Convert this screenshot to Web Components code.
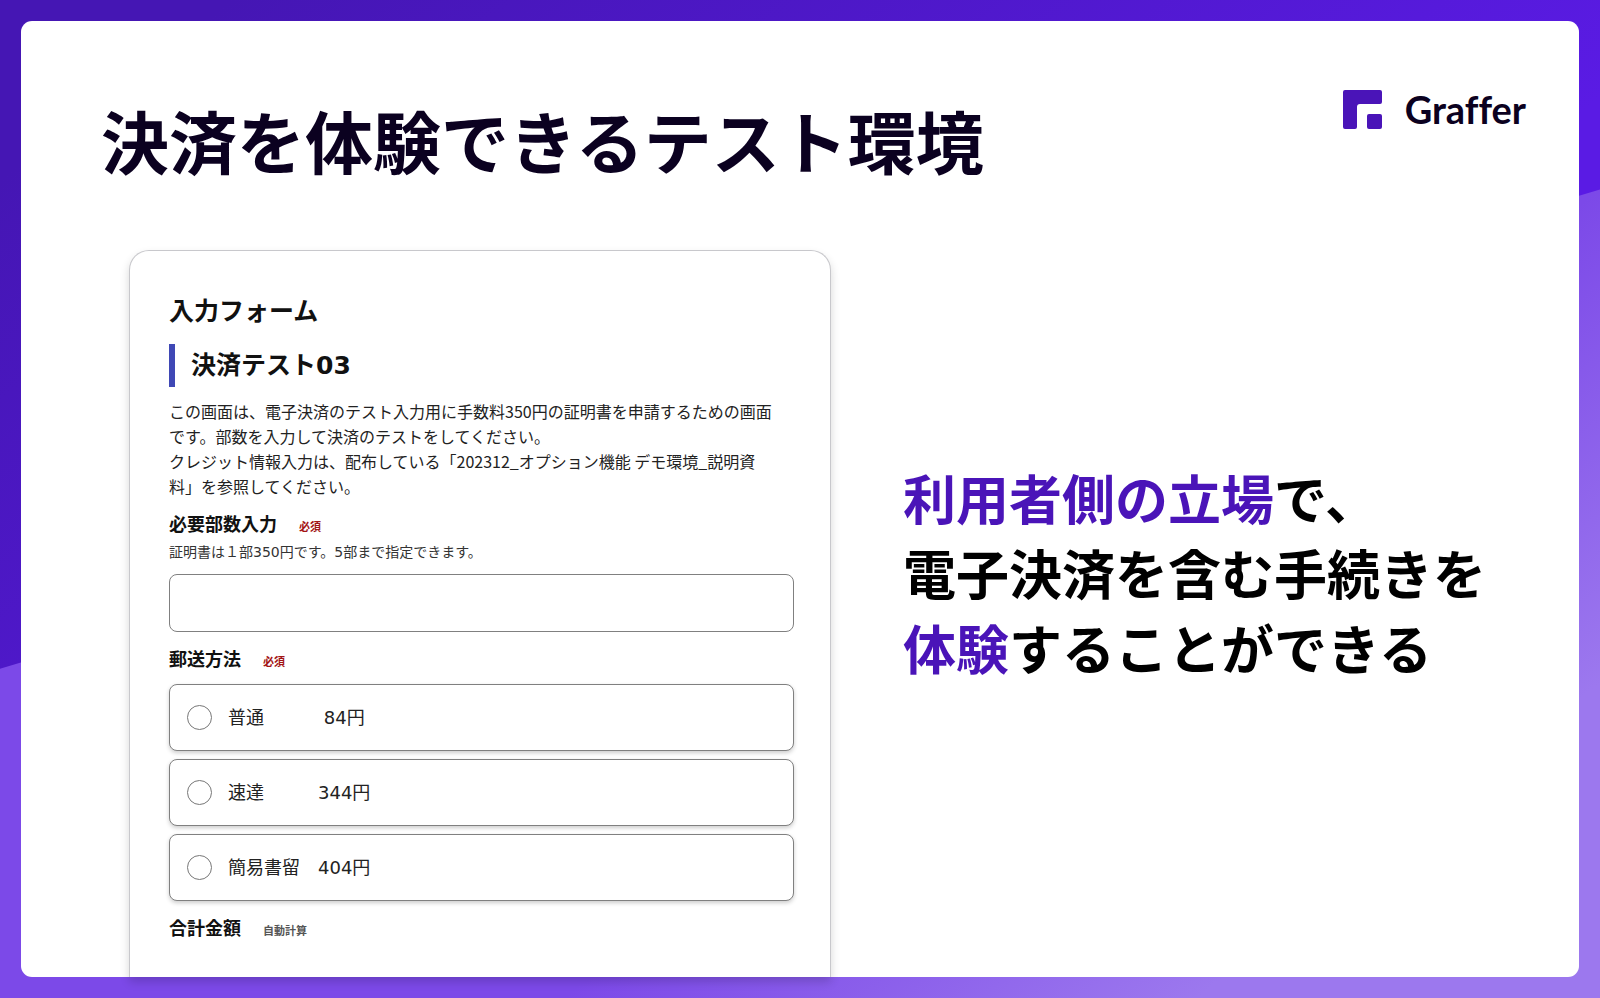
<!DOCTYPE html>
<html lang="ja">
<head>
<meta charset="utf-8">
<title>決済を体験できるテスト環境</title>
<style>
  body {
    margin: 0;
    font-family: "Noto Sans CJK JP", sans-serif;
    color: #000;
  }
</style>
</head>
<body>
<promo-slide>
  <slide-title slot="title">決済を体験できるテスト環境</slide-title>
  <brand-logo slot="logo"></brand-logo>
  <form-card slot="preview" heading="入力フォーム" subject="決済テスト03">
    <span slot="description">この画面は、電子決済のテスト入力用に手数料350円の証明書を申請するための画面<br>です。部数を入力して決済のテストをしてください。<br>クレジット情報入力は、配布している「202312_オプション機能 デモ環境_説明資<br>料」を参照してください。</span>
    <count-field label="必要部数入力" note="必須" hint="証明書は１部350円です。5部まで指定できます。"></count-field>
    <shipping-options label="郵送方法" note="必須"></shipping-options>
    <total-row label="合計金額" note="自動計算"></total-row>
  </form-card>
  <slide-message slot="message"><em>利用者側の立場</em>で、<br>電子決済を含む手続きを<br><em>体験</em>することができる</slide-message>
</promo-slide>

<script>
// Shared by every labelled row of the form.
const labelStyles = `
  .label {
    display: flex;
    align-items: center;
    gap: 22px;
    font-size: 18px;
    line-height: 26px;
    font-weight: 700;
    color: #111;
  }
  .note {
    padding-top: 5px;
    font-size: 11px;
    line-height: 16px;
    color: #a31515;
  }
`;

class PromoSlide extends HTMLElement {
  constructor() {
    super();
    this.attachShadow({ mode: 'open' }).innerHTML = `
      <style>
        :host {
          display: grid;
          box-sizing: border-box;
          min-height: 100vh;
          background: linear-gradient(142deg, #4516b4 8%, #5a1be4 60%);
        }
        .wave, main {
          grid-area: 1 / 1;
        }
        .wave {
          background: linear-gradient(142deg, #7c49e8 64%, #9c78ee 86%);
          clip-path: polygon(0 67%, 100% 19%, 100% 100%, 0 100%);
        }
        main {
          display: flex;
          flex-direction: column;
          margin: 21px;
          border-radius: 11px;
          background: #fff;
          z-index: 1;
        }
        header {
          display: flex;
          justify-content: space-between;
          align-items: flex-start;
          padding: 66px 53px 0 80px;
        }
        .columns {
          flex: 1;
          display: grid;
          grid-template-columns: 702px 1fr;
          column-gap: 72px;
          padding: 58px 0 0 108px;
        }
      </style>
      <div class="wave"></div>
      <main>
        <header>
          <slot name="title"></slot>
          <slot name="logo"></slot>
        </header>
        <div class="columns">
          <slot name="preview"></slot>
          <slot name="message"></slot>
        </div>
      </main>
    `;
  }
}

class SlideTitle extends HTMLElement {
  constructor() {
    super();
    this.attachShadow({ mode: 'open' }).innerHTML = `
      <style>
        :host { display: block; }
        h1 {
          margin: 0;
          font-size: 68px;
          line-height: 105px;
          font-weight: 700;
          color: #0b0120;
          white-space: nowrap;
        }
      </style>
      <h1><slot></slot></h1>
    `;
  }
}

class BrandLogo extends HTMLElement {
  constructor() {
    super();
    this.attachShadow({ mode: 'open' }).innerHTML = `
      <style>
        :host {
          display: flex;
          align-items: center;
          gap: 23px;
          font: 700 38px/44px Lato, sans-serif;
          font-variant-ligatures: none;
          color: #0b0120;
        }
        svg { width: 39px; height: 39px; }
      </style>
      <svg viewBox="0 0 39 39" fill="#4a14b8" aria-hidden="true">
        <path d="M2 0H37Q39 0 39 2V12Q39 14 37 14H17Q14 14 14 17V37Q14 39 12 39H2Q0 39 0 37V2Q0 0 2 0Z"/>
        <rect x="24" y="24" width="15" height="15" rx="2"/>
      </svg>
      <span>Graffer</span>
    `;
  }
}

class FormCard extends HTMLElement {
  constructor() {
    super();
    this.attachShadow({ mode: 'open' }).innerHTML = `
      <style>
        :host {
          display: block;
          box-sizing: border-box;
          padding: 40px 36px 24px 39px;
          border: 1px solid #c8c8cc;
          border-bottom: 0;
          border-radius: 20px 20px 0 0;
          background: #fff;
          box-shadow: 0 5px 10px rgba(0, 0, 0, 0.16);
        }
        h2, h3, p { margin: 0; color: #111; }
        h2 { font-size: 25px; line-height: 36px; }
        h3 {
          margin-top: 17px;
          padding-left: 16px;
          border-left: 6px solid #3f48b5;
          font: 700 25px/43px "DejaVu Sans", "Noto Sans CJK JP", sans-serif;
        }
        p {
          margin: 12px 0 11px;
          font-size: 16px;
          line-height: 25px;
          white-space: nowrap;
          color: #222;
        }
      </style>
      <h2></h2>
      <h3></h3>
      <p><slot name="description"></slot></p>
      <slot></slot>
    `;
  }

  connectedCallback() {
    this.shadowRoot.querySelector('h2').textContent = this.getAttribute('heading');
    this.shadowRoot.querySelector('h3').textContent = this.getAttribute('subject');
  }
}

class CountField extends HTMLElement {
  connectedCallback() {
    this.attachShadow({ mode: 'open' }).innerHTML = `
      <style>
        ${labelStyles}
        :host { display: block; }
        .hint {
          margin: 4px 0 10px;
          font: 14px/24px "DejaVu Sans", "Noto Sans CJK JP", sans-serif;
          color: #333;
        }
        input {
          display: block;
          box-sizing: border-box;
          width: 100%;
          height: 58px;
          padding: 0 16px;
          border: 1px solid #808080;
          border-radius: 8px;
          background: #fff;
          font: inherit;
        }
      </style>
      <label class="label" for="count">${this.getAttribute('label')}<span class="note">${this.getAttribute('note')}</span></label>
      <p class="hint" id="hint">${this.getAttribute('hint')}</p>
      <input id="count" type="text" inputmode="numeric" aria-describedby="hint">
    `;
  }
}

class ShippingOptions extends HTMLElement {
  connectedCallback() {
    // Ideographic spaces line the prices up in one column.
    const options = [
      '普通\u3000\u3000\u3000 84円',
      '速達\u3000\u3000\u3000344円',
      '簡易書留\u3000404円',
    ];
    this.attachShadow({ mode: 'open' }).innerHTML = `
      <style>
        ${labelStyles}
        :host { display: block; margin-top: 13px; }
        .list {
          display: flex;
          flex-direction: column;
          gap: 8px;
          margin-top: 13px;
        }
        .option {
          display: flex;
          align-items: center;
          gap: 16px;
          box-sizing: border-box;
          height: 67px;
          padding: 0 17px;
          border: 1px solid #808080;
          border-radius: 8px;
          background: #fff;
          box-shadow: 0 2px 4px rgba(0, 0, 0, 0.2);
          font: 18px/28px "DejaVu Sans", "Noto Sans CJK JP", sans-serif;
          white-space: pre;
          color: #222;
        }
        input {
          appearance: none;
          box-sizing: border-box;
          width: 25px;
          height: 25px;
          margin: 0;
          border: 1px solid #777;
          border-radius: 50%;
        }
        input:checked { background: radial-gradient(#3f48b5 50%, transparent 55%); }
      </style>
      <div class="label" id="shipping">${this.getAttribute('label')}<span class="note">${this.getAttribute('note')}</span></div>
      <div class="list" role="radiogroup" aria-labelledby="shipping">
        ${options.map((text) => `<label class="option"><input type="radio" name="shipping"><span>${text}</span></label>`).join('')}
      </div>
    `;
  }
}

class TotalRow extends HTMLElement {
  connectedCallback() {
    this.attachShadow({ mode: 'open' }).innerHTML = `
      <style>
        ${labelStyles}
        :host { display: block; margin-top: 13px; }
        .note { color: #555; }
      </style>
      <div class="label">${this.getAttribute('label')}<span class="note">${this.getAttribute('note')}</span></div>
    `;
  }
}

class SlideMessage extends HTMLElement {
  constructor() {
    super();
    this.attachShadow({ mode: 'open' }).innerHTML = `
      <style>
        :host { display: block; padding-top: 210px; }
        p {
          margin: 0;
          font-size: 53px;
          line-height: 75px;
          font-weight: 700;
          white-space: nowrap;
        }
        ::slotted(em) { font-style: normal; color: #4a14b8; }
      </style>
      <p><slot></slot></p>
    `;
  }
}

customElements.define('promo-slide', PromoSlide);
customElements.define('slide-title', SlideTitle);
customElements.define('brand-logo', BrandLogo);
customElements.define('form-card', FormCard);
customElements.define('count-field', CountField);
customElements.define('shipping-options', ShippingOptions);
customElements.define('total-row', TotalRow);
customElements.define('slide-message', SlideMessage);
</script>
</body>
</html>
